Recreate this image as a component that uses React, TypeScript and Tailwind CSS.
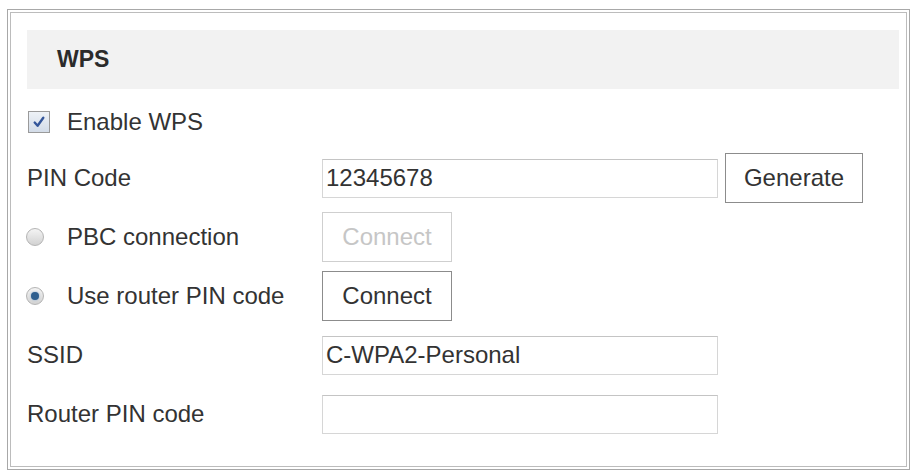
import { useState } from "react";

const font = { fontFamily: '"Liberation Sans", Arial, sans-serif' };

const Row = ({ label, children, className = "" }: { label: React.ReactNode; children?: React.ReactNode; className?: string }) => (
  <div className={`flex items-center h-[50px] ${className}`}>
    <div className="w-[295px] shrink-0 flex items-center">{label}</div>
    <div className="flex items-center">{children}</div>
  </div>
);

const Radio = ({ checked }: { checked: boolean }) => (
  <span className="w-[18px] h-[18px] rounded-full border border-[#b4b4b4] bg-gradient-to-b from-[#f4f4f4] to-[#d2d2d2] flex items-center justify-center">
    {checked && <span className="w-[8px] h-[8px] rounded-full bg-[#2f5f8f] shadow-[0_0_2px_#7fa7d0]" />}
  </span>
);

const TextBox = ({ value }: { value: string }) => (
  <div className="w-[396px] h-[39px] border border-[#d6d6d6] border-t-[#c4c4c4] bg-white pl-[3px] flex items-center text-[24px] text-[#333]">
    {value}
  </div>
);

const App = () => {
  const [enabled, setEnabled] = useState(true);
  const [mode, setMode] = useState<"pbc" | "pin">("pin");

  return (
    <div className="w-[915px] h-[471px] bg-white pt-[9px] pl-[7px]" style={font}>
      <div className="w-[903px] h-[461px] border border-[#a8a8a8] p-[2px]">
        <div className="h-full border border-[#bcbcbc] pl-[16px] pr-[7px] pt-[17px] text-[24px] text-[#333]">
          <div className="h-[59px] bg-[#f2f2f2] pl-[30px] flex items-center">
            <span className="text-[23px] font-bold text-[#2b2b2b]">WPS</span>
          </div>

          <div className="flex items-center h-[52px] mt-[7px]">
            <button
              onClick={() => setEnabled(!enabled)}
              className="ml-[1px] w-[22px] h-[22px] border border-[#9a9a9a] bg-gradient-to-b from-[#eef2f7] to-[#d3dce8] flex items-center justify-center"
            >
              {enabled && (
                <svg width="14" height="14" viewBox="0 0 13 13">
                  <path d="M2.5 7 L5.2 10 L10.5 2.5" fill="none" stroke="#34569a" strokeWidth="2.2" strokeLinecap="round" strokeLinejoin="round" />
                </svg>
              )}
            </button>
            <span className="ml-[17px]">Enable WPS</span>
          </div>

          <Row label="PIN Code" className="mt-[5px]">
            <TextBox value="12345678" />
            <button className="ml-[7px] w-[138px] h-[50px] border border-[#8c8c8c] bg-white text-[24px] text-[#333]">
              Generate
            </button>
          </Row>

          <Row
            className="mt-[9px]"
            label={
              <button onClick={() => setMode("pbc")} className="flex items-center -ml-[1px]">
                <Radio checked={mode === "pbc"} />
                <span className="ml-[23px]">PBC connection</span>
              </button>
            }
          >
            <button
              disabled={mode !== "pbc"}
              className={`w-[130px] h-[50px] border bg-white text-[24px] ${mode === "pbc" ? "border-[#8c8c8c] text-[#333]" : "border-[#cfcfcf] text-[#c6c6c6]"}`}
            >
              Connect
            </button>
          </Row>

          <Row
            className="mt-[9px]"
            label={
              <button onClick={() => setMode("pin")} className="flex items-center -ml-[1px]">
                <Radio checked={mode === "pin"} />
                <span className="ml-[23px]">Use router PIN code</span>
              </button>
            }
          >
            <button
              disabled={mode !== "pin"}
              className={`w-[130px] h-[50px] border bg-white text-[24px] ${mode === "pin" ? "border-[#8c8c8c] text-[#333]" : "border-[#cfcfcf] text-[#c6c6c6]"}`}
            >
              Connect
            </button>
          </Row>

          <Row label="SSID" className="mt-[9px]">
            <TextBox value="C-WPA2-Personal" />
          </Row>

          <Row label="Router PIN code" className="mt-[9px]">
            <TextBox value="" />
          </Row>
        </div>
      </div>
    </div>
  );
};

export default App;
